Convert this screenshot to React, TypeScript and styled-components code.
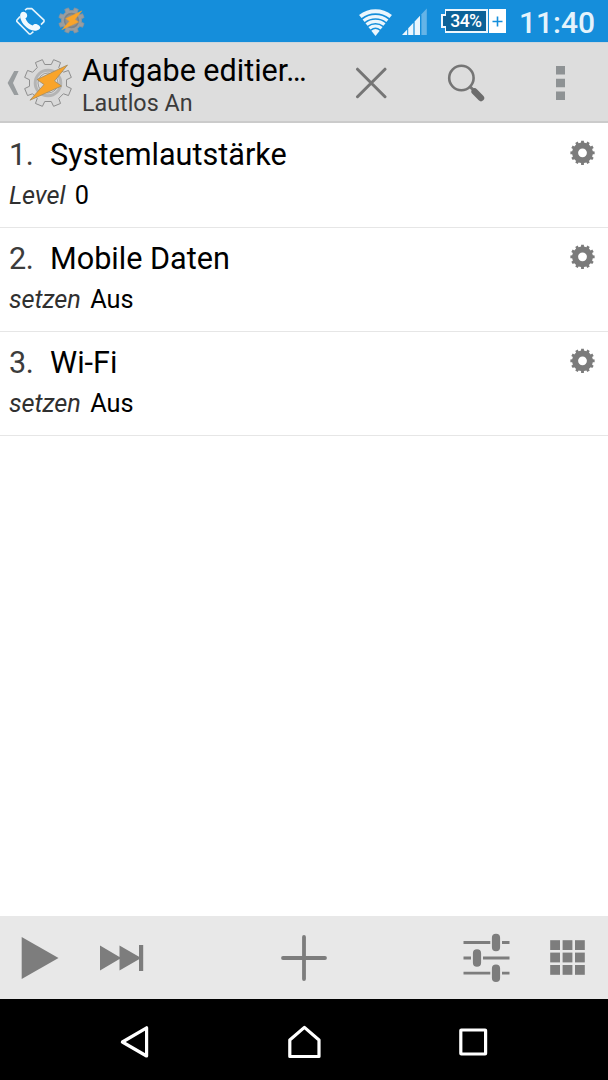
import React from 'react';
import styled, { createGlobalStyle } from 'styled-components';

const GlobalStyle = createGlobalStyle`
  body { margin: 0; background: #fff; }
  * { box-sizing: border-box; }
  svg { display: block; flex: none; }
`;

const Screen = styled.div`
  width: 608px;
  height: 1080px;
  display: flex;
  flex-direction: column;
  overflow: hidden;
  background: #fff;
  color: #000;
  font-family: Roboto, sans-serif;
`;

const StatusBar = styled.header`
  height: 42px;
  flex: none;
  display: flex;
  align-items: flex-start;
  justify-content: space-between;
  background: #158edb;
`;

const Notifications = styled.div`
  display: flex;
  gap: 12px;
  padding: 6px 0 0 15px;
`;

const TaskerSlot = styled.div`
  padding-top: 1px;
`;

const SystemStatus = styled.div`
  display: flex;
  align-items: flex-start;
  padding: 8px 13px 0 0;
`;

const SignalWrap = styled.div`
  margin: 0 13px 0 9px;
`;

const Battery = styled.div`
  display: flex;
  align-items: center;
  height: 24px;
  margin-top: 1px;
`;

const BatteryTip = styled.div`
  width: 5px;
  height: 14px;
  margin-right: -1px;
  border: 2px solid #eef7fd;
  border-right: 0;
  background: #0c6298;
  z-index: 1;
`;

const BatteryBody = styled.div`
  width: 43px;
  height: 24px;
  display: flex;
  align-items: center;
  justify-content: center;
  border: 2px solid #eef7fd;
  border-left-width: 1px;
  background: #0c6298;
  color: #fff;
  font-size: 17.6px;
  font-weight: 500;
  line-height: 20px;
  letter-spacing: -0.6px;
`;

const BatteryCharge = styled.div`
  width: 17px;
  height: 24px;
  margin-left: 1px;
  display: flex;
  align-items: center;
  justify-content: center;
  background: #fff;
`;

const Clock = styled.div`
  margin-left: 13px;
  color: #e4f3fc;
  font-size: 30px;
  font-weight: 500;
  line-height: 30px;
`;

const AppBar = styled.div`
  height: 81px;
  flex: none;
  display: flex;
  align-items: center;
  padding-top: 1px;
  background: #dddddd;
  border-top: 1px solid #ccd6dd;
  border-bottom: 2px solid #cbcbcb;
`;

const UpButton = styled.div`
  display: flex;
  align-items: center;
  gap: 4px;
  padding-left: 7px;
  width: 82px;
`;

const Titles = styled.div`
  width: 242px;
  padding-top: 6px;
  white-space: nowrap;
`;

const Title = styled.h1`
  margin: 0;
  font-size: 30.5px;
  font-weight: 400;
  line-height: 34px;
`;

const Subtitle = styled.div`
  color: #3b3b3b;
  font-size: 23.3px;
  line-height: 30px;
`;

const BarAction = styled.div`
  width: 94.6px;
  display: flex;
  justify-content: center;
`;

const TaskList = styled.main`
  flex: 1;
  padding-top: 1px;
`;

const TaskRow = styled.section`
  height: 104px;
  display: flex;
  justify-content: space-between;
  padding: 12px 12px 0 9px;
  border-bottom: 1px solid #e6e6e6;
`;

const TaskHead = styled.div`
  display: flex;
  font-size: 30.6px;
  line-height: 38px;
`;

const TaskNumber = styled.span`
  width: 41px;
  color: #3c3c3c;
  letter-spacing: -0.4px;
`;

const TaskParam = styled.div`
  display: flex;
  gap: 9.5px;
  margin-top: 3px;
  font-size: 25.3px;
  line-height: 38px;
`;

const ParamName = styled.em`
  color: #303030;
  letter-spacing: -0.1px;
`;

const GearSlot = styled.div`
  padding-top: 4px;
`;

const Toolbar = styled.footer`
  height: 83px;
  flex: none;
  display: flex;
  align-items: center;
  justify-content: space-between;
  padding: 0 22px 0 21px;
  background: #e8e8e8;
`;

const ToolGroup = styled.div<{ $gap?: number; $width: number; $end?: boolean }>`
  display: flex;
  align-items: center;
  gap: ${(p) => p.$gap ?? 0}px;
  width: ${(p) => p.$width}px;
  justify-content: ${(p) => (p.$end ? 'flex-end' : 'flex-start')};
`;

const NavBar = styled.nav`
  height: 81px;
  flex: none;
  display: flex;
  align-items: center;
  justify-content: center;
  padding-top: 5px;
  gap: 135px;
  background: #000;
`;

function gearPath(c: number, teeth: number, outer: number, inner: number, offset: number, topHalf: number, baseHalf: number) {
  const pts: string[] = [];
  const at = (r: number, deg: number) => {
    const a = (deg * Math.PI) / 180;
    pts.push(`${(c + r * Math.sin(a)).toFixed(2)} ${(c - r * Math.cos(a)).toFixed(2)}`);
  };
  for (let i = 0; i < teeth; i++) {
    const mid = offset + (i * 360) / teeth;
    at(inner, mid - baseHalf);
    at(outer, mid - topHalf);
    at(outer, mid + topHalf);
    at(inner, mid + baseHalf);
  }
  return `M${pts.join('L')}Z`;
}

function TaskerIcon({ size, small }: { size: number; small?: boolean }) {
  return (
    <svg width={size} height={size} viewBox="0 0 50 50">
      <path
        d={gearPath(25, 8, 24, 18.8, 22.5, 9, 12.5)}
        fill={small ? '#999da0' : '#d9d9d9'}
        stroke={small ? '#8d959a' : '#8e8e8e'}
        strokeWidth={small ? 1.5 : 1}
        strokeLinejoin="round"
      />
      <circle cx="25" cy="25" r="12.8" fill={small ? '#8d9296' : '#d6d6d6'} stroke={small ? '#7c8388' : '#b4b4b4'} strokeWidth="3" />
      <circle cx="25" cy="25" r="10" fill={small ? '#8d9296' : '#dcdcdc'} stroke="#8f8f8f" strokeWidth="0.8" />
      <path
        d="M44.5 7L14 21.5L21 26.5L7 42.2L38.5 28L31.5 23Z"
        fill="#f9a42a"
        stroke={small ? '#e59b33' : '#a08a62'}
        strokeWidth="0.8"
        strokeLinejoin="round"
      />
    </svg>
  );
}

function PhoneIcon() {
  return (
    <svg width="31" height="31" viewBox="0 0 31 31" fill="none">
      <path d="M10 4.2L12 2.6H16.8L29 14.2V15.6L26 18.6M5 10.6L1.8 14.2V15.4L14.3 28H15.6L18.4 25.6" stroke="#e6f4fc" strokeWidth="1.6" strokeLinejoin="round" />
      <path
        d="M6.3 6.4C8.2 5 11.2 6 12 8.4C12.6 10.3 11.9 11.3 10.4 12.3C11.5 15.6 14.1 18.4 17.5 19.6C18.6 18.1 20.4 17.6 22.4 18.5C25 19.8 26.2 21.4 24.6 23C20.5 26.6 13.5 24.2 9.6 19.6C5.8 15.2 3.6 9 6.3 6.4Z"
        fill="#f1f9fe"
      />
    </svg>
  );
}

function WifiIcon() {
  const cx = 16.5;
  const cy = 28;
  const half = (38 * Math.PI) / 180;
  const arc = (r: number) => {
    const dx = r * Math.sin(half);
    const dy = r * Math.cos(half);
    return `M${cx - dx} ${cy - dy}A${r} ${r} 0 0 1 ${cx + dx} ${cy - dy}`;
  };
  return (
    <svg width="34" height="29" viewBox="0 0 34 29">
      <path d={arc(24.7)} fill="none" stroke="#ecf6fd" strokeWidth="4" />
      {[19.3, 14.6, 9.9].map((r) => (
        <path key={r} d={arc(r)} fill="none" stroke="#ecf6fd" strokeWidth="3.3" />
      ))}
      <path d={`${arc(6.8)}L${cx} ${cy}Z`} fill="#ecf6fd" />
    </svg>
  );
}

function SignalIcon() {
  return (
    <svg width="26" height="28" viewBox="0 0 26 28">
      <path d="M0 27L5.2 21.4V27ZM6.2 20.2L11.4 14.8V27H6.2ZM12.6 13.4L18 7.8V27H12.6Z" fill="#ecf6fd" />
      <path d="M19.4 6.2L24.8 0.5V27H19.4Z" fill="#65b4e7" />
    </svg>
  );
}

function RowGear() {
  return (
    <svg width="27" height="26" viewBox="0 0 27 26">
      <path
        fillRule="evenodd"
        transform="translate(0.5 -0.2)"
        d={`${gearPath(13, 12, 12.2, 10.4, 0, 6.5, 8)}M8.6 13a4.4 4.4 0 1 0 8.8 0a4.4 4.4 0 1 0 -8.8 0Z`}
        fill="#7b7b7b"
      />
    </svg>
  );
}

const tasks = [
  { title: 'Systemlautstärke', name: 'Level', value: '0' },
  { title: 'Mobile Daten', name: 'setzen', value: 'Aus' },
  { title: 'Wi-Fi', name: 'setzen', value: 'Aus' },
];

export default function App() {
  return (
    <Screen>
      <GlobalStyle />
      <StatusBar>
        <Notifications>
          <PhoneIcon />
          <TaskerSlot>
            <TaskerIcon size={27} small />
          </TaskerSlot>
        </Notifications>
        <SystemStatus>
          <WifiIcon />
          <SignalWrap>
            <SignalIcon />
          </SignalWrap>
          <Battery>
            <BatteryTip />
            <BatteryBody>34%</BatteryBody>
            <BatteryCharge>
              <svg width="11" height="11" viewBox="0 0 11 11">
                <path d="M5.5 0.5V10.5M0.5 5.5H10.5" stroke="#158edb" strokeWidth="1.6" />
              </svg>
            </BatteryCharge>
          </Battery>
          <Clock>11:40</Clock>
        </SystemStatus>
      </StatusBar>

      <AppBar>
        <UpButton>
          <svg width="12" height="26" viewBox="0 0 12 26">
            <path d="M7.2 1H11.6L6 13L11.6 25H7.2L0.6 13Z" fill="#999d9f" />
          </svg>
          <TaskerIcon size={50} />
        </UpButton>
        <Titles>
          <Title>Aufgabe editier…</Title>
          <Subtitle>Lautlos An</Subtitle>
        </Titles>
        <BarAction>
          <svg width="32" height="32" viewBox="0 0 32 32">
            <path d="M2.5 2.2L30 29.7M30 2.2L2.5 29.7" stroke="#757575" strokeWidth="3" strokeLinecap="round" />
          </svg>
        </BarAction>
        <BarAction>
          <svg width="38" height="38" viewBox="0 0 38 38" fill="none">
            <circle cx="14.4" cy="14" r="12.2" stroke="#757575" strokeWidth="2.6" />
            <path d="M22.9 22.5L26.4 26" stroke="#757575" strokeWidth="3" />
            <path d="M27.6 27.5L34 34" stroke="#6c6c6c" strokeWidth="6.4" strokeLinecap="round" />
          </svg>
        </BarAction>
        <BarAction>
          <svg width="9" height="34" viewBox="0 0 9 34">
            <path d="M0 0H9V8.5H0ZM0 12.7H9V21.2H0ZM0 25.4H9V33.9H0Z" fill="#8e9294" />
          </svg>
        </BarAction>
      </AppBar>

      <TaskList>
        {tasks.map((t, i) => (
          <TaskRow key={t.title}>
            <div>
              <TaskHead>
                <TaskNumber>{i + 1}.</TaskNumber>
                <span>{t.title}</span>
              </TaskHead>
              <TaskParam>
                <ParamName>{t.name}</ParamName>
                <span>{t.value}</span>
              </TaskParam>
            </div>
            <GearSlot>
              <RowGear />
            </GearSlot>
          </TaskRow>
        ))}
      </TaskList>

      <Toolbar>
        <ToolGroup $gap={41} $width={200}>
          <svg width="38" height="44" viewBox="0 0 38 44">
            <path d="M0.7 1V43L37.5 22Z" fill="#7d7d7d" />
          </svg>
          <svg width="44" height="28" viewBox="0 0 44 28">
            <path d="M0 1.5V26.5L19.5 15V26.5L39 15.2V27H43.2V1H39V12.8L19.5 1.5V13Z" fill="#7d7d7d" />
          </svg>
        </ToolGroup>
        <svg width="46" height="46" viewBox="0 0 46 46">
          <path d="M23 2V44M2 23H44" stroke="#7d7d7d" strokeWidth="3.8" strokeLinecap="round" />
        </svg>
        <ToolGroup $gap={40} $width={200} $end>
          <svg width="48" height="50" viewBox="0 0 48 50">
            <path d="M1.5 9.5H28.3M40 9.5H47.5M1.5 25H9M21 25H47.5M1.5 40.2H28.3M40 40.2H47.5" stroke="#7d7d7d" strokeWidth="2.8" />
            <path d="M34 4.8V14.2M15 20.3V29.7M34 35.5V44.9" stroke="#7d7d7d" strokeWidth="8.2" strokeLinecap="round" />
          </svg>
          <svg width="36" height="36" viewBox="0 0 36 36">
            {[0.2, 12.6, 25].map((y) =>
              [0.2, 12.6, 25].map((x) => <rect key={`${x}-${y}`} x={x} y={y} width="9.8" height="9.8" fill="#7d7d7d" />),
            )}
          </svg>
        </ToolGroup>
      </Toolbar>

      <NavBar>
        <svg width="34" height="34" viewBox="0 0 34 34" fill="none">
          <path d="M28.6 2.8V31L4.4 17Z" stroke="#fff" strokeWidth="3.2" strokeLinejoin="round" />
        </svg>
        <svg width="34" height="34" viewBox="0 0 34 34" fill="none">
          <path d="M17.4 2.4L32 15V31.5H2.8V15Z" stroke="#fff" strokeWidth="3.2" strokeLinejoin="round" />
        </svg>
        <svg width="34" height="34" viewBox="0 0 34 34" fill="none">
          <rect x="4.8" y="5" width="24.8" height="24" rx="0.5" stroke="#fff" strokeWidth="3.2" />
        </svg>
      </NavBar>
    </Screen>
  );
}
